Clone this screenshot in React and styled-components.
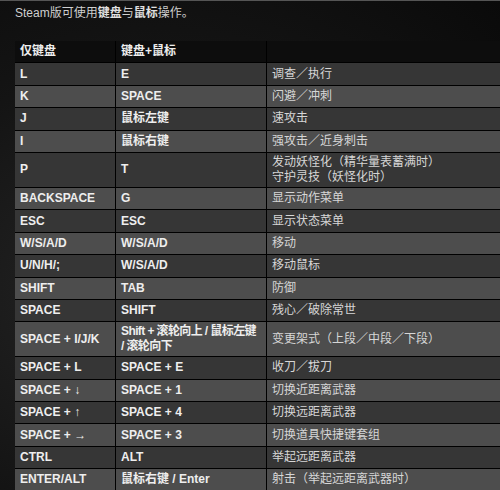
import React from "react";
import styled, { createGlobalStyle } from "styled-components";

const Global = createGlobalStyle`
  html, body { margin: 0; padding: 0; }
  body {
    width: 500px; height: 490px; overflow: hidden;
    background: radial-gradient(ellipse at 30% 60%, #262626 0%, #141414 55%, #0a0a0a 100%);
    font-family: "Liberation Sans", "Noto Sans CJK SC", sans-serif;
  }
`;

const Page = styled.div`
  padding: 4px 0 0 15px;
  border-top: 1px solid #555;
`;

const Intro = styled.div`
  color: #cfcfcf;
  font-size: 12px;
  line-height: 16px;
  height: 36px;
  & b { font-weight: bold; color: #e0e0e0; }
`;

const Table = styled.div`
  display: grid;
  grid-template-columns: 100px 150px 242px;
  background: #000;
  gap: 1px;
  width: 500px;
`;

const Cell = styled.div`
  background: ${p => (p.$head ? "#0d0d0d" : p.$alt ? "#4d4d4d" : "#363636")};
  color: ${p => (p.$desc ? "#d6d6d6" : "#eeeeee")};
  font-weight: ${p => (p.$desc ? "normal" : "bold")};
  font-size: 12px;
  line-height: 15px;
  letter-spacing: ${p => (p.$tight ? "-0.6px" : "normal")};
  min-height: 21.4px;
  padding: 2px 5px;
  box-sizing: border-box;
  display: flex;
  flex-direction: column;
  justify-content: center;
  white-space: nowrap;
`;

const rows = [
  ["L", "E", "调查／执行"],
  ["K", "SPACE", "闪避／冲刺"],
  ["J", "鼠标左键", "速攻击"],
  ["I", "鼠标右键", "强攻击／近身刺击"],
  ["P", "T", ["发动妖怪化（精华量表蓄满时）", "守护灵技（妖怪化时）"]],
  ["BACKSPACE", "G", "显示动作菜单"],
  ["ESC", "ESC", "显示状态菜单"],
  ["W/S/A/D", "W/S/A/D", "移动"],
  ["U/N/H/;", "W/S/A/D", "移动鼠标"],
  ["SHIFT", "TAB", "防御"],
  ["SPACE", "SHIFT", "残心／破除常世"],
  ["SPACE + I/J/K", ["Shift + 滚轮向上 / 鼠标左键", "/ 滚轮向下"], "变更架式（上段／中段／下段）"],
  ["SPACE + L", "SPACE + E", "收刀／拔刀"],
  ["SPACE + ↓", "SPACE + 1", "切换近距离武器"],
  ["SPACE + ↑", "SPACE + 4", "切换远距离武器"],
  ["SPACE + →", "SPACE + 3", "切换道具快捷键套组"],
  ["CTRL", "ALT", "举起远距离武器"],
  ["ENTER/ALT", "鼠标右键 / Enter", "射击（举起远距离武器时）"],
];

const show = v => (Array.isArray(v) ? v.map((l, i) => <div key={i}>{l}</div>) : v);

export default function App() {
  return (
    <>
      <Global />
      <Page>
        <Intro>Steam版可使用<b>键盘</b>与<b>鼠标</b>操作。</Intro>
        <Table>
          <Cell $head>仅键盘</Cell>
          <Cell $head>键盘+鼠标</Cell>
          <Cell $head></Cell>
          {rows.map((r, i) =>
            r.map((c, j) => (
              <Cell key={i + "-" + j} $alt={i % 2 === 1} $desc={j === 2} $tight={Array.isArray(c) && j === 1}>
                {show(c)}
              </Cell>
            ))
          )}
        </Table>
      </Page>
    </>
  );
}
